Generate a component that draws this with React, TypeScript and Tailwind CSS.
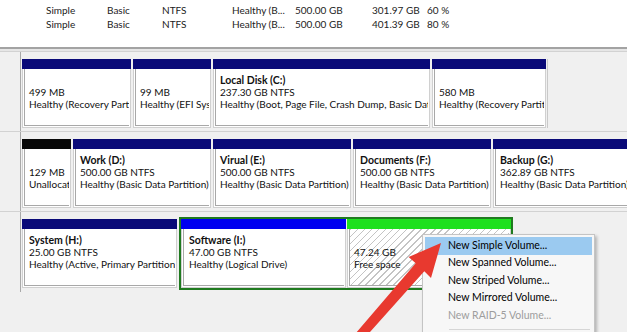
import React from 'react';

type Part = {
  w: number;
  bar: string;
  name?: string;
  size: string;
  status: string;
  hatched?: boolean;
};

const TOP_ROWS = [
  ['Simple', 'Basic', 'NTFS', 'Healthy (B...', '500.00 GB', '301.97 GB', '60 %'],
  ['Simple', 'Basic', 'NTFS', 'Healthy (B...', '500.00 GB', '401.39 GB', '80 %'],
];

const ROW1: Part[] = [
  { w: 109, bar: 'bg-[#0a0a78]', size: '499 MB', status: 'Healthy (Recovery Partition)' },
  { w: 78, bar: 'bg-[#0a0a78]', size: '99 MB', status: 'Healthy (EFI System Partition)' },
  { w: 217, bar: 'bg-[#0a0a78]', name: 'Local Disk  (C:)', size: '237.30 GB NTFS', status: 'Healthy (Boot, Page File, Crash Dump, Basic Data Partition)' },
  { w: 114, bar: 'bg-[#0a0a78]', size: '580 MB', status: 'Healthy (Recovery Partition)' },
];

const ROW2: Part[] = [
  { w: 49, bar: 'bg-[#080808]', size: '129 MB', status: 'Unallocated' },
  { w: 138, bar: 'bg-[#0a0a78]', name: 'Work  (D:)', size: '500.00 GB NTFS', status: 'Healthy (Basic Data Partition)' },
  { w: 138, bar: 'bg-[#0a0a78]', name: 'Virual  (E:)', size: '500.00 GB NTFS', status: 'Healthy (Basic Data Partition)' },
  { w: 138, bar: 'bg-[#0a0a78]', name: 'Documents  (F:)', size: '500.00 GB NTFS', status: 'Healthy (Basic Data Partition)' },
  { w: 140, bar: 'bg-[#0a0a78]', name: 'Backup  (G:)', size: '362.89 GB NTFS', status: 'Healthy (Basic Data Partition)' },
];

const MENU = [
  { label: 'New Simple Volume...', active: true },
  { label: 'New Spanned Volume...' },
  { label: 'New Striped Volume...' },
  { label: 'New Mirrored Volume...' },
  { label: 'New RAID-5 Volume...', disabled: true },
];

function Partition({ p, pad = 'pl-[4px]' }: { p: Part; pad?: string }) {
  return (
    <div className="flex flex-col shrink-0" style={{ width: p.w }}>
      <div className={`h-[10px] ${p.bar}`} />
      <div className="h-[59px] bg-white border-x border-b border-[#d0d0d0] px-[1px] pb-[1px]">
        <div
          className={`h-full border-l border-b border-[#a8a8a8] ${pad} pt-[5px] overflow-hidden whitespace-nowrap leading-[12px] text-[10px] text-[#111] ${
            p.hatched
              ? 'bg-[repeating-linear-gradient(135deg,#c4c4c4_0px,#c4c4c4_1px,#ffffff_1px,#ffffff_5px)]'
              : 'bg-white'
          }`}
        >
          <div className="h-[12px] font-bold text-[10.5px]">{p.name ?? ''}</div>
          <div>{p.size}</div>
          <div>{p.status}</div>
        </div>
      </div>
    </div>
  );
}

function DiskRow({ children }: { children: React.ReactNode }) {
  return (
    <div className="flex h-[80px] border-t border-[#d2d2d2]">
      <div className="w-[21px] shrink-0 border-r border-[#a9a9a9]" />
      <div className="pt-[7px] pl-[1px] flex items-start">{children}</div>
    </div>
  );
}

export default function App() {
  return (
    <div className="relative w-[627px] h-[332px] overflow-hidden bg-[#f0f0f0] font-['Lato','Noto_Sans',sans-serif]">
      {/* volume list */}
      <div className="h-[47px] bg-white pt-[3px]">
        {TOP_ROWS.map((r, i) => (
          <div key={i} className="flex h-[14px] items-center text-[10px] text-[#222] whitespace-nowrap">
            <span className="ml-[46px] w-[61px]">{r[0]}</span>
            <span className="w-[55px]">{r[1]}</span>
            <span className="w-[70px]">{r[2]}</span>
            <span className="w-[63px]">{r[3]}</span>
            <span className="w-[77px]">{r[4]}</span>
            <span className="w-[55px]">{r[5]}</span>
            <span>{r[6]}</span>
          </div>
        ))}
      </div>
      <div className="h-[2px] bg-[#a3a3a3]" />
      <div className="h-[2px] bg-[#e6e6e6]" />

      {/* disk rows */}
      <DiskRow>
        <div className="flex gap-[2px] pr-[1px] border-r border-[#c9c9c9]">
          {ROW1.map((p, i) => (
            <Partition key={i} p={p} />
          ))}
        </div>
      </DiskRow>
      <DiskRow>
        <div className="flex gap-[2px]">
          {ROW2.map((p, i) => (
            <Partition key={i} p={p} />
          ))}
        </div>
      </DiskRow>
      <div className="flex h-[81px] border-t border-[#d2d2d2]">
        <div className="w-[21px] shrink-0 border-r border-[#a9a9a9]" />
        <div className="pl-[1px] pt-[5px] flex items-start gap-[2px]">
          <div className="pt-[2px]">
            <Partition
              p={{ w: 155, bar: 'bg-[#0a0a78]', name: 'System  (H:)', size: '25.00 GB NTFS', status: 'Healthy (Active, Primary Partition)' }}
            />
          </div>
          <div className="flex gap-[1px] border-2 border-[#1f7a1f]">
            <Partition
              p={{ w: 165, bar: 'bg-[#0000f0]', name: 'Software  (I:)', size: '47.00 GB NTFS', status: 'Healthy (Logical Drive)' }}
              pad="pl-[5px]"
            />
            <Partition p={{ w: 164, bar: 'bg-[#1ee01e]', size: '47.24 GB', status: 'Free space', hatched: true }} />
          </div>
        </div>
      </div>

      {/* context menu */}
      <div className="absolute left-[422px] top-[234px] w-[173px] h-[110px] bg-[#f7f7f7] border border-[#c4c4c4] shadow-[2px_2px_3px_rgba(0,0,0,0.25)] pt-[2px] px-[2px]">
        {MENU.map((m, i) => (
          <div
            key={i}
            className={`h-[17.5px] flex items-center pl-[23px] text-[10.5px] whitespace-nowrap ${
              m.active ? 'bg-[#9bcaf0] text-black' : m.disabled ? 'text-[#9d9d9d]' : 'text-black'
            }`}
          >
            {m.label}
          </div>
        ))}
        <div className="mt-[4px] ml-[24px] mr-[2px] h-px bg-[#d6d6d6]" />
      </div>

      {/* red arrow */}
      <svg className="absolute left-0 top-0 pointer-events-none" width="627" height="332" viewBox="0 0 627 332">
        <polygon
          points="441,243 431,278 424.3,271.3 356.6,347 349.6,340.4 415.7,263.3 408.6,257"
          fill="#e8392f"
        />
      </svg>
    </div>
  );
}
